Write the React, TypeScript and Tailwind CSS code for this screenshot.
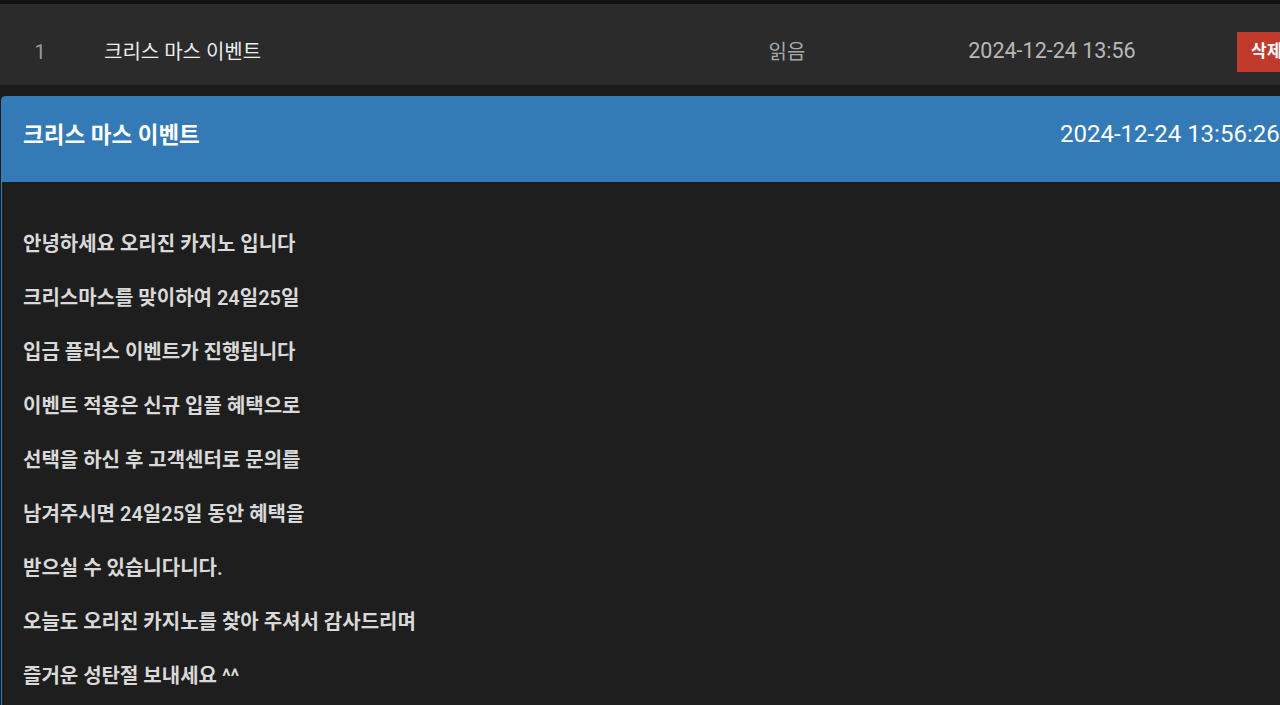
import React from "react";

const LINES = [
    "안녕하세요 오리진 카지노 입니다",
    "크리스마스를 맞이하여 24일25일",
    "입금 플러스 이벤트가 진행됩니다",
    "이벤트 적용은 신규 입플 혜택으로",
    "선택을 하신 후 고객센터로 문의를",
    "남겨주시면 24일25일 동안 혜택을",
    "받으실 수 있습니다니다.",
    "오늘도 오리진 카지노를 찾아 주셔서 감사드리며",
    "즐거운 성탄절 보내세요 ^^",
];

export default function App() {
    return (
        <div
            className="w-[1280px] h-[705px] overflow-hidden bg-[#1b1b1b]"
            style={{ fontFamily: 'Roboto, "Noto Sans CJK KR", sans-serif' }}
        >
            <div className="h-[4px] bg-[#121212]" />

            {/* message row */}
            <div className="flex items-center h-[81px] pt-[14px] bg-[#2b2b2b] text-[20px] whitespace-nowrap">
                <div className="shrink-0 w-[80px] text-center text-[#9a9a9a]">1</div>
                <div className="shrink-0 w-[600px] pl-6 text-[#ececec]">크리스 마스 이벤트</div>
                <div className="shrink-0 w-[214px] text-center text-[#a8a8a8]">읽음</div>
                <div className="shrink-0 w-[316px] text-center text-[21.5px] text-[#b8b8b8]">2024-12-24 13:56</div>
                <div className="shrink-0 pl-[27px]">
                    <button className="h-[40px] px-[14px] bg-[#c0392b] text-white text-[17px] font-bold">
                        삭제
                    </button>
                </div>
            </div>

            <div className="h-[11px]" />

            {/* detail panel */}
            <div className="ml-[1px] w-[1300px] rounded-t-[4px] border border-[#337ab7] bg-[#1e1e1e]">
                <div className="flex items-start justify-between h-[85px] bg-[#337ab7] pl-[21px] pt-[21px] whitespace-nowrap text-white">
                    <div className="text-[22.5px] font-bold leading-[32px] pt-[1px]">크리스 마스 이벤트</div>
                    <div className="w-[240px] text-[24px] leading-[32px]">2024-12-24 13:56:26</div>
                </div>
                <div className="pl-[21px] pt-[47px] pb-6 text-[20px] font-semibold text-[#d9d9d9] whitespace-nowrap">
                    {LINES.map((line) => (
                        <p key={line} className="leading-[30px] mb-6">
                            {line}
                        </p>
                    ))}
                </div>
            </div>
        </div>
    );
}
